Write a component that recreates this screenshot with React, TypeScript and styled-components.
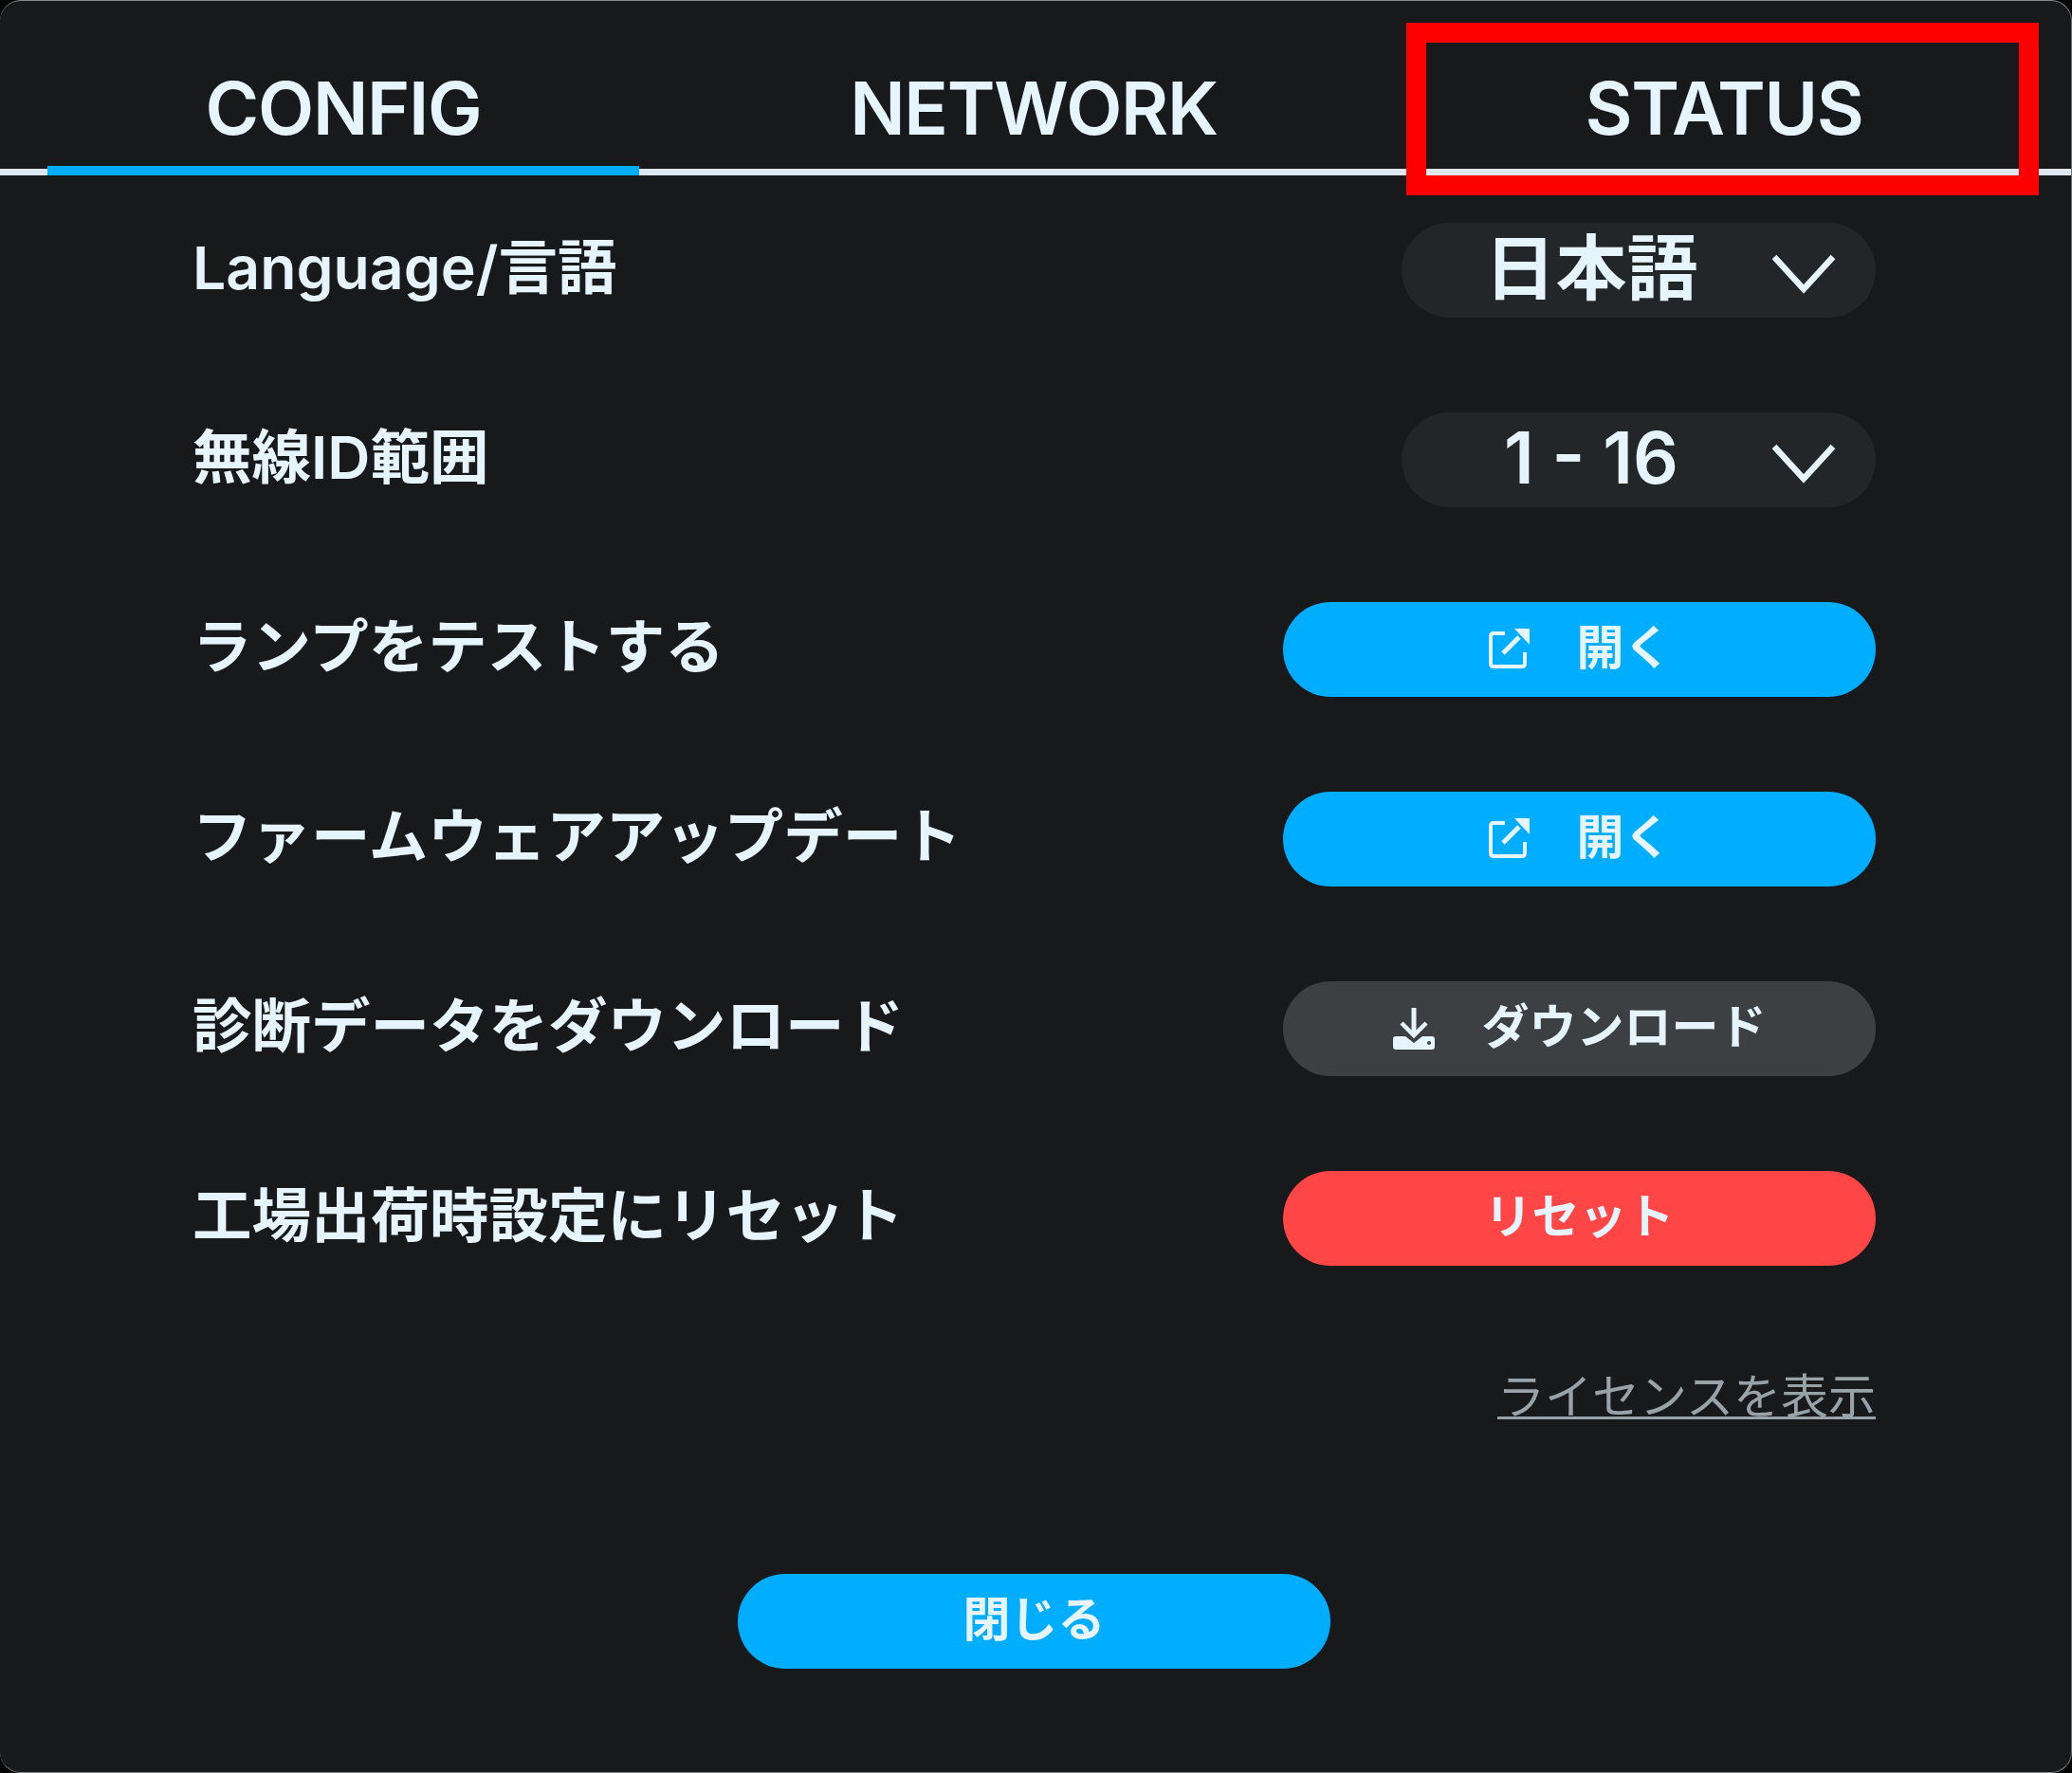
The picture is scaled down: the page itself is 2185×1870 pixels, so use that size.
import React from 'react'
import styled, { createGlobalStyle } from 'styled-components'

const fontStack = `Inter, "Noto Sans CJK JP", sans-serif`

const GlobalStyle = createGlobalStyle`
    html, body {
        margin: 0;
        padding: 0;
        background: #060606;
    }
`

const Panel = styled.div`
    position: relative;
    box-sizing: border-box;
    width: 2185px;
    height: 1870px;
    border-top: 1px solid #8b8c8d;
    border-bottom: 1px solid #8b8c8d;
    border-right: 1px solid #6f7071;
    border-radius: 22px;
    background: #18191b;
    font-family: ${fontStack};
    color: #e6f4fe;
    overflow: hidden;
`

const TabBar = styled.div`
    box-sizing: border-box;
    height: 184px;
    padding: 0 54px 0 50px;
    display: flex;
    justify-content: space-between;
    border-bottom: 7px solid #dfe7ee;
`

const Tab = styled.div<{ $active?: boolean }>`
    width: 624px;
    height: 184px;
    padding-top: 71px;
    box-sizing: border-box;
    text-align: center;
    font-size: 77px;
    line-height: 84px;
    font-weight: 600;
    letter-spacing: -1.3px;
    border-bottom: 10px solid ${(p) => (p.$active ? '#00adff' : 'transparent')};
`

const Highlight = styled.div`
    position: absolute;
    left: 1483px;
    top: 23px;
    width: 667px;
    height: 182px;
    box-sizing: border-box;
    border: 21px solid #ff0000;
    pointer-events: none;
`

const Rows = styled.div`
    padding: 50px 206px 0 203px;
    display: flex;
    flex-direction: column;
    gap: 100px;
`

const Row = styled.div`
    height: 100px;
    display: flex;
    align-items: center;
    justify-content: space-between;
`

const Label = styled.div`
    font-size: 62.5px;
    line-height: 80px;
    font-weight: 600;
    margin-top: -7px;
`

const Select = styled.div`
    box-sizing: border-box;
    width: 500px;
    height: 100px;
    border-radius: 50px;
    background: #222628;
    display: flex;
    align-items: center;
    padding: 0 42px 0 10px;
`

const SelectValue = styled.div`
    flex: 1;
    text-align: center;
    font-size: 75px;
    line-height: 100px;
    font-weight: 600;
    margin-top: -5px;
`

const ChevronIcon = styled.svg`
    margin-top: 6px;
`

const Button = styled.div<{ $tone: 'blue' | 'gray' | 'red' }>`
    box-sizing: border-box;
    width: 625px;
    height: 100px;
    border-radius: 50px;
    background: ${(p) =>
        p.$tone === 'blue' ? '#00adff' : p.$tone === 'red' ? '#ff4646' : '#3c4043'};
    display: flex;
    align-items: center;
    justify-content: center;
    gap: 50px;
    font-size: 50px;
    line-height: 60px;
    font-weight: 600;
`

const ButtonText = styled.span`
    margin-top: -4px;
`

const Footer = styled.div`
    padding: 108px 206px 0 204px;
    display: flex;
    justify-content: flex-end;
`

const LicenseLink = styled.a`
    font-size: 50px;
    line-height: 60px;
    color: #98a3a9;
    text-decoration: underline;
    text-decoration-thickness: 3px;
    text-underline-offset: 3px;
`

const CloseRow = styled.div`
    margin-top: 157px;
    display: flex;
    justify-content: center;
    padding-right: 3px;
`

const Chevron = () => (
    <ChevronIcon width="68" height="44" viewBox="0 0 68 44" fill="none">
        <path d="M3 5 L34 39 L65 5" stroke="#e6f4fe" strokeWidth="6.5" />
    </ChevronIcon>
)

const ExternalIcon = () => (
    <svg width="44" height="44" viewBox="0 0 44 44" fill="none">
        <path
            d="M18 5 H6 Q3 5 3 8 V37 Q3 40 6 40 H36 Q39 40 39 37 V25"
            stroke="#e6f4fe"
            strokeWidth="4"
        />
        <path d="M16 26 L33 9" stroke="#e6f4fe" strokeWidth="5" />
        <path d="M28 0 H44 V17 Z" fill="#e6f4fe" />
    </svg>
)

const DownloadIcon = () => (
    <svg width="44" height="44" viewBox="0 0 44 44" fill="none">
        <path d="M22 0 V26" stroke="#e6f4fe" strokeWidth="5" />
        <path d="M9 16 L22 29 L35 16" stroke="#e6f4fe" strokeWidth="4.5" />
        <path
            d="M3 30 H13 L22 37 L31 30 H41 Q44 30 44 33 V41 Q44 44 41 44 H3 Q0 44 0 41 V33 Q0 30 3 30 Z"
            fill="#e6f4fe"
        />
        <circle cx="38" cy="37" r="2" fill="#3c4043" />
    </svg>
)

const App = () => {
    return (
        <Panel>
            <GlobalStyle />
            <TabBar>
                <Tab $active>CONFIG</Tab>
                <Tab>NETWORK</Tab>
                <Tab>STATUS</Tab>
            </TabBar>
            <Highlight />
            <Rows>
                <Row>
                    <Label>Language/言語</Label>
                    <Select>
                        <SelectValue>日本語</SelectValue>
                        <Chevron />
                    </Select>
                </Row>
                <Row>
                    <Label>無線ID範囲</Label>
                    <Select>
                        <SelectValue>1 - 16</SelectValue>
                        <Chevron />
                    </Select>
                </Row>
                <Row>
                    <Label>ランプをテストする</Label>
                    <Button $tone="blue">
                        <ExternalIcon />
                        <ButtonText>開く</ButtonText>
                    </Button>
                </Row>
                <Row>
                    <Label>ファームウェアアップデート</Label>
                    <Button $tone="blue">
                        <ExternalIcon />
                        <ButtonText>開く</ButtonText>
                    </Button>
                </Row>
                <Row>
                    <Label>診断データをダウンロード</Label>
                    <Button $tone="gray">
                        <DownloadIcon />
                        <ButtonText>ダウンロード</ButtonText>
                    </Button>
                </Row>
                <Row>
                    <Label>工場出荷時設定にリセット</Label>
                    <Button $tone="red">
                        <ButtonText>リセット</ButtonText>
                    </Button>
                </Row>
            </Rows>
            <Footer>
                <LicenseLink>ライセンスを表示</LicenseLink>
            </Footer>
            <CloseRow>
                <Button $tone="blue">
                    <ButtonText>閉じる</ButtonText>
                </Button>
            </CloseRow>
        </Panel>
    )
}

export default App
